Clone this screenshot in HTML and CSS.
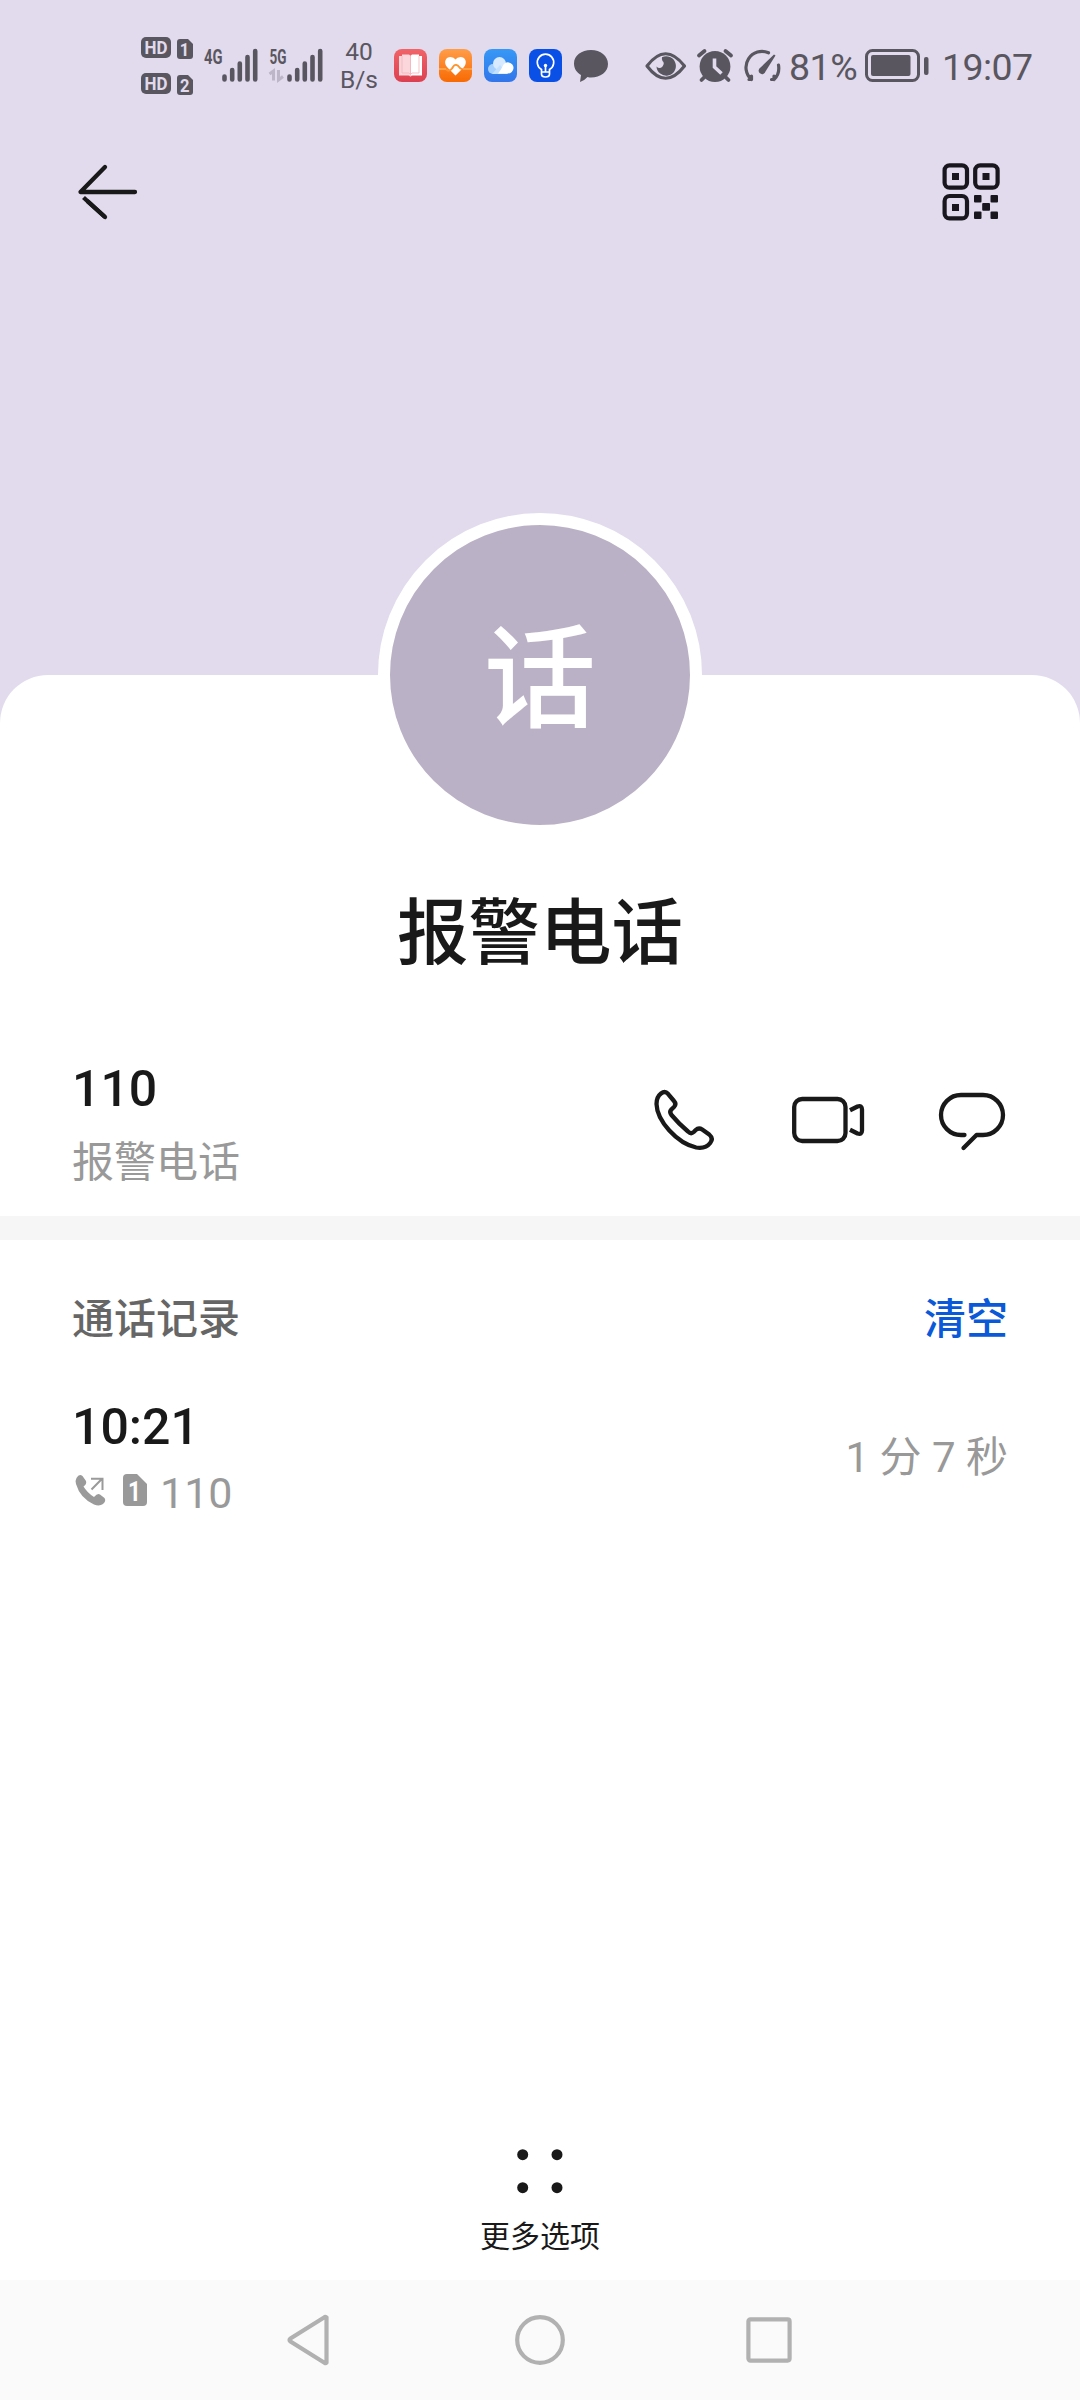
FILE: index.html
```html
<!DOCTYPE html>
<html lang="zh-CN">
<head>
<meta charset="utf-8">
<title>报警电话</title>
<link rel="stylesheet" href="styles.css">
</head>
<body>
<div class="phone">
  <header class="hero">
    <div class="status">
      <svg class="sims" width="52" height="72" viewBox="0 -6 52 72">
        <rect x="0" y="1" width="30" height="21" rx="5"/>
        <path d="M39 3h8l5 5v12q0 3-3 3h-10q-3 0-3-3v-14q0-3 3-3z"/>
        <rect x="0" y="37" width="30" height="21" rx="5"/>
        <path d="M39 39h8l5 5v12q0 3-3 3h-10q-3 0-3-3v-14q0-3 3-3z"/>
        <g class="cut">
          <text x="3.500" y="18.300" font-size="19" textLength="23" lengthAdjust="spacingAndGlyphs">HD</text>
          <text x="38.800" y="20" font-size="19" textLength="9.500" lengthAdjust="spacingAndGlyphs">1</text>
          <text x="3.500" y="54.300" font-size="19" textLength="23" lengthAdjust="spacingAndGlyphs">HD</text>
          <text x="39" y="56" font-size="19" textLength="9.500" lengthAdjust="spacingAndGlyphs">2</text>
        </g>
      </svg>
      <svg class="net4" width="54" height="36" viewBox="0 0 54 36">
        <text x="0" y="16" font-size="19.500" textLength="18.500" lengthAdjust="spacingAndGlyphs">4G</text>
        <path class="bars" d="M20.500 31.500v-3M28.200 31.500v-9.500M35.800 31.500v-16M43.500 31.500v-22.500M51.200 31.500v-28.500"/>
      </svg>
      <svg class="net5" width="54" height="36" viewBox="0 0 54 36">
        <text x="0.500" y="16" font-size="19.500" textLength="17" lengthAdjust="spacingAndGlyphs">5G</text>
        <path class="data" d="M0.500 26L4.500 23V32.500M9.500 22V32L14 28.500"/>
        <path class="bars" d="M20.500 31.500v-3M28.200 31.500v-9.500M35.800 31.500v-16M43.500 31.500v-22.500M51.200 31.500v-28.500"/>
      </svg>
      <div class="speed"><span>40</span><span>B/s</span></div>
      <div class="apps">
        <svg width="33" height="33" viewBox="0 0 33 33">
          <defs><linearGradient id="gr" x2="0" y2="1"><stop stop-color="#f06468"/><stop offset="1" stop-color="#dc4050"/></linearGradient></defs>
          <rect width="33" height="33" rx="8" fill="url(#gr)"/>
          <path d="M5 7h3v-1.500h7l1.500 1.200V26.500H5z" fill="#fbd6da"/>
          <path d="M28 7h-3v-1.500h-7l-1.500 1.200V26.500H28z" fill="#fff"/>
          <path d="M8 7v17h7l1.500 1.500V7M25 7v17h-7l-1.500 1.500" fill="none" stroke="#f3b4ba" stroke-width=".8"/>
          <path d="M14.500 26.500h4l-2 1z" fill="#fff"/>
        </svg>
        <svg width="33" height="33" viewBox="0 0 33 33">
          <defs><linearGradient id="go" x2="0" y2="1"><stop stop-color="#ff9d49"/><stop offset="1" stop-color="#f86a03"/></linearGradient></defs>
          <rect width="33" height="33" rx="8" fill="url(#go)"/>
          <path d="M16.500 26.500L8 18C4 13 7 8 11.500 8q3.500 0 5 2.500Q18 8 21.500 8C26 8 29 13 25 18z" fill="#fff"/>
          <path d="M7 20q3 3.500 6-.5 3.500-7 8-.5l2.500 1.500" fill="none" stroke="#ff942f" stroke-width="2"/>
          <path d="M0 20h7M24 20h9" stroke="#ffad55" stroke-width="1.500"/>
        </svg>
        <svg width="33" height="33" viewBox="0 0 33 33">
          <defs><linearGradient id="gb" x2="0" y2="1"><stop stop-color="#3698f6"/><stop offset="1" stop-color="#3275ea"/></linearGradient></defs>
          <rect width="33" height="33" rx="8" fill="url(#gb)"/>
          <circle cx="9" cy="20" r="5" fill="#a6d0ff"/><circle cx="15.500" cy="14.500" r="6.500" fill="#d8eaff"/>
          <path d="M8 25l8-9 8 9z" fill="#c4e0ff"/>
          <path d="M14 24.500Q17 21 18.500 17.500A5.600 5.600 0 1 1 24 24.500z" fill="#fff"/>
        </svg>
        <svg width="33" height="33" viewBox="0 0 33 33">
          <rect width="33" height="33" rx="8" fill="#0b50e6"/>
          <path d="M12.500 23v-2.500A8.200 8.200 0 1 1 20.500 20.500V23zM12.500 23v2q0 3 4 3t4-3v-2M16.500 17v6" fill="none" stroke="#fff" stroke-width="1.700"/>
          <circle cx="16.500" cy="16.500" r="1.700" fill="#fff"/>
        </svg>
        <svg width="34" height="33" viewBox="0 0 34 33"><path class="ink" d="M17 1C7.500 1 0 6.500 0 14.500c0 5 2.500 9 7 11.500L6 33q4.500-1.500 7.500-5 2 .5 3.500.5c9.500 0 17-5.500 17-13.500S26.500 1 17 1z"/></svg>
      </div>
      <svg class="eye" width="42" height="28" viewBox="0 0 42 28">
        <path d="M2 14Q20.500-10.500 39.500 14 20.500 38.500 2 14z" fill="none" stroke="#5a5660" stroke-width="3.200" stroke-linejoin="round"/>
        <path class="ink" d="M17 5.200A9.700 9.700 0 1 1 11.500 14.500q3 3 6 0 2.500-3.500 0-5.500-1-1.500-.5-3.800z"/>
      </svg>
      <svg class="alarm" width="36" height="34" viewBox="0 0 36 34">
        <circle class="ink" cx="18" cy="17.500" r="15.400"/>
        <path d="M2 6.500L7.500 2M28.500 2L34 6.500M7 28.500L4.500 31M29 28.500L31.500 31" stroke="#5a5660" stroke-width="3.800" stroke-linecap="round"/>
        <path d="M17.500 9.500V18l7 6.500" fill="none" stroke="#e1dbed" stroke-width="3.600"/>
      </svg>
      <svg class="gauge" width="38" height="33" viewBox="0 0 38 33">
        <path d="M24.500 2.800A16 16 0 0 0 7.500 29.500V26M7.500 29.500H5M34.500 15Q36 24 30 29.500V26M30 29.500H27.500" fill="none" stroke="#5a5660" stroke-width="3.200" stroke-linecap="round" stroke-linejoin="round"/>
        <path class="ink" d="M30 4.500l1.500 1L21.500 21.500a3.500 3.500 0 1 1-5-4z"/>
      </svg>
      <span class="pct">81%</span>
      <svg class="battery" width="64" height="34" viewBox="0 0 64 34">
        <rect x="1.500" y="1.500" width="52" height="30" rx="6" fill="none" stroke="#5a5660" stroke-width="3"/>
        <rect class="ink" x="6" y="6" width="39.500" height="21" rx="2"/>
        <rect class="ink" x="59" y="8" width="4.500" height="18" rx="2"/>
      </svg>
      <span class="clock">19:07</span>
    </div>
    <nav class="toolbar">
      <svg width="72" height="72" viewBox="0 0 72 72" class="line">
        <path d="M67 36H12.500L37 11"/><path d="M15.500 41.500L37 61" stroke-linecap="butt"/><path d="M20 45.600L37 61"/>
      </svg>
      <svg width="72" height="72" viewBox="0 0 72 72">
        <g fill="none" stroke="#19161e" stroke-width="4.200"><rect x="9.600" y="9.300" width="22.400" height="22.400" rx="5"/><rect x="40.200" y="9.300" width="22.400" height="22.400" rx="5"/><rect x="9.600" y="40" width="22.400" height="22.400" rx="5"/></g>
        <g fill="#19161e"><path d="M17 17h7v7h-7zM47.500 17h7v7h-7zM17 48h7v7h-7z"/><rect x="39" y="39" width="7.500" height="7.500" rx="1"/><rect x="55.500" y="39" width="7.500" height="7.500" rx="1"/><rect x="47.200" y="47" width="7.800" height="7.800" rx="1"/><rect x="39" y="55.500" width="7.500" height="7.500" rx="1"/><rect x="55.500" y="55.500" width="7.500" height="7.500" rx="1"/></g>
      </svg>
    </nav>
  </header>
  <main class="sheet">
    <div class="avatar">话</div>
    <h1 class="name">报警电话</h1>
    <section class="number">
      <div class="number-text">
        <div class="big">110</div>
        <div class="label">报警电话</div>
      </div>
      <div class="actions">
        <svg class="line" width="72" height="72" viewBox="0 0 72 72"><path d="M8.500 20Q8.500 13 13 9.500q4-3 7 .3L26 17q2.800 3.200 0 6l-2.500 2.300q-2.500 2.700 0 5.700Q31 40 40 47.500q3 3 5.700.5l2-2q3-2.800 6.500-.5l7 5q4.500 4 1 8.500-4.500 6-14 4.500C29 59 9 37 8.500 20z"/></svg>
        <svg class="line" width="72" height="72" viewBox="0 0 72 72"><rect x="2.200" y="15" width="51.300" height="42" rx="8"/><path stroke-linecap="butt" d="M58 26.200L65.500 22.500Q70 21 70 25.500V46.500Q70 51 65.500 49.500L58 45.800"/></svg>
        <svg class="line" width="72" height="72" viewBox="0 0 72 72"><path d="M28.500 51H25A20 20 0 0 1 25 11H47A20 20 0 0 1 47 51H40.500L27.500 64"/></svg>
      </div>
    </section>
    <section class="log">
      <div class="log-head"><h2>通话记录</h2><a class="clear">清空</a></div>
      <div class="entry">
        <div>
          <div class="big">10:21</div>
          <div class="meta">
            <svg class="out" width="31" height="32" viewBox="0 0 31 32"><path d="M1.500 4Q4-.5 7.500 2l3.500 5q1 3-2.500 5.500Q12 18.500 19 23q3.500-4 6-2.500l4.500 3.500q2 3-1.500 6-3.500 2.500-9 .5Q5 24 1 10 0 6.500 1.500 4z" fill="#9a9a9a"/><path d="M16 4.800h11.500v4.500M27.300 4.500L16.500 15.500M27.500 9v7" fill="none" stroke="#9a9a9a" stroke-width="2"/></svg>
            <svg class="sim" width="24" height="32" viewBox="0 0 24 32"><path d="M4 0h10l10 10v18q0 4-4 4H4q-4 0-4-4V4q0-4 4-4z" fill="#999"/><text x="5" y="26.500" font-size="28" textLength="13" lengthAdjust="spacingAndGlyphs" fill="#fff">1</text></svg>
            <span>110</span>
          </div>
        </div>
        <div class="duration">1 分 7 秒</div>
      </div>
    </section>
    <footer class="more">
      <svg width="72" height="72" viewBox="0 0 72 72" fill="#191919"><circle cx="18.700" cy="18.700" r="5.500"/><circle cx="53" cy="18.700" r="5.500"/><circle cx="18.700" cy="51.700" r="5.500"/><circle cx="53" cy="51.700" r="5.500"/></svg>
      <span>更多选项</span>
    </footer>
  </main>
  <div class="navbar">
    <svg width="52" height="52" viewBox="0 0 52 52"><path d="M41.500 3.500V48.500q-.7 1-1.700.5L5.500 27.500q-2-1.500 0-3L39.800 3q1-.5 1.700.5z"/></svg>
    <svg width="52" height="52" viewBox="0 0 52 52"><circle cx="26" cy="26" r="22.800"/></svg>
    <svg width="52" height="52" viewBox="0 0 52 52"><rect x="5.400" y="5.400" width="41.200" height="41.200" rx="2"/></svg>
  </div>
</div>
</body>
</html>
```
FILE: styles.css
```css
* { box-sizing: border-box; }
body { margin: 0; font-family: Roboto, "Noto Sans CJK SC", sans-serif; color: #191919; }
svg { display: block; flex: none; overflow: visible; }
.phone { width: 1080px; height: 2400px; display: flex; flex-direction: column; background: #e1dbed; overflow: hidden; }
.hero { height: 675px; flex: none; }

.status { height: 132px; padding-left: 141px; display: flex; align-items: center; color: #5a5660; white-space: nowrap; }
.status text { font-weight: 700; }
.ink, .sims, .net4 text, .net5 text { fill: #5a5660; }
.sims { margin-top: -1px; }
.cut { fill: #e1dbed; }
.bars { stroke: #5a5660; stroke-width: 4.600; stroke-linecap: round; }
.data { fill: none; stroke: #bdb6c8; stroke-width: 3; }
.net4 { margin-left: 11px; }
.net5 { margin-left: 11px; }
.speed { width: 60px; margin-left: 6px; display: flex; flex-direction: column; align-items: center; font-size: 24.500px; line-height: 28px; font-weight: 400; }
.apps { display: flex; gap: 12px; margin-left: 5px; margin-top: -1px; }
.eye { margin-left: 37px; }
.alarm { margin-left: 10px; }
.gauge { margin-left: 11px; }
.pct { width: 76px; margin-left: 7px; font-size: 37.500px; letter-spacing: -0.500px; }
.clock { margin-left: 13px; font-size: 37.500px; letter-spacing: -0.600px; }
.pct, .clock { font-weight: 400; line-height: 44px; padding-top: 2px; }

.toolbar { height: 120px; padding: 24px 72px; display: flex; justify-content: space-between; }
.toolbar svg:first-child { margin-left: -4px; }
.toolbar svg:last-child { margin-right: 1px; }
.line { fill: none; stroke: #191919; stroke-width: 4.300; stroke-linecap: round; stroke-linejoin: round; }

.sheet { height: 1605px; flex: none; background: #fff; border-radius: 48px 48px 0 0; display: flex; flex-direction: column; align-items: center; }
.avatar { width: 324px; height: 324px; flex: none; margin-top: -162px; padding-top: 6px; border: 12px solid #fff; border-radius: 50%; background: #bab1c6; color: #fff; font-size: 112px; line-height: 300px; text-align: center; font-weight: 500; }
.name { margin: 45px 0 0; font-size: 71.500px; line-height: 104px; font-weight: 500; }
.number { width: 100%; height: 254px; flex: none; padding: 73px 72px 0; display: flex; justify-content: space-between; border-bottom: 24px solid #f6f6f6; }
.big { font-size: 50px; line-height: 60px; font-weight: 500; }
.label { margin-top: 14px; font-size: 42px; line-height: 60px; color: #999; }
.actions { display: flex; gap: 72px; padding-top: 25px; }
.log { width: 100%; padding: 50px 72px 0; }
.log-head { display: flex; justify-content: space-between; font-size: 42px; line-height: 60px; }
.log-head h2 { margin: 0; font-size: 42px; font-weight: 500; color: #666; }
.clear { color: #0a59d8; font-weight: 500; }
.entry { margin-top: 47px; display: flex; justify-content: space-between; }
.meta { display: flex; align-items: center; height: 60px; margin-top: 6px; font-size: 43px; color: #999; font-weight: 400; }
.out { margin: -6px 17px 0 3px; }
.sim { margin: -6px 13px 0 0; }
.sim text { font-weight: 700; }
.duration { margin-top: 31px; font-size: 42px; line-height: 60px; color: #999; font-weight: 400; }
.more { margin-top: auto; padding-bottom: 21px; display: flex; flex-direction: column; align-items: center; font-size: 30px; line-height: 44px; }
.more span { margin-top: 7px; }

.navbar { height: 120px; flex: none; background: #fafafa; display: flex; justify-content: center; align-items: center; gap: 177px; }
.navbar svg { fill: none; stroke: #b1b1b1; stroke-width: 4.200; }
```
